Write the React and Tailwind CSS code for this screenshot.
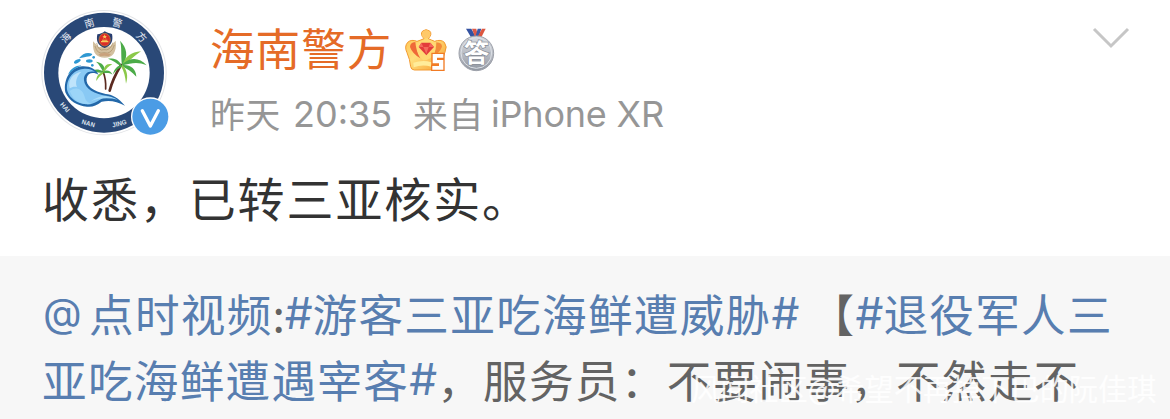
import clsx from 'clsx'

const Avatar = () => (
  <svg viewBox="0 0 420 420" className="h-[140px] w-[140px] shrink-0">
    <circle cx="207" cy="203" r="188" fill="#e3e5e8" />
    <circle cx="207" cy="203" r="185" fill="#fff" />
    <circle cx="207" cy="203" r="180" fill="#294877" />
    <circle cx="207" cy="203" r="137" fill="#fff" />

    {/* Ring lettering */}
    <g fill="#e8edf5" textAnchor="middle" fontSize="30" fontFamily="'Noto Sans CJK SC', sans-serif">
      <text transform="translate(92 98) rotate(-47)" y="11">海</text>
      <text transform="translate(163 54) rotate(-16)" y="11">南</text>
      <text transform="translate(247 53) rotate(15)" y="11">警</text>
      <text transform="translate(320 96) rotate(46)" y="11">方</text>
    </g>
    <g fill="#dbe3ee" textAnchor="middle" fontSize="20" fontWeight="700" fontFamily="'Liberation Sans', sans-serif">
      <text transform="translate(90 307) rotate(49)" y="7" textLength="32" lengthAdjust="spacingAndGlyphs">HAI</text>
      <text transform="translate(160 355) rotate(15)" y="7" textLength="40" lengthAdjust="spacingAndGlyphs">NAN</text>
      <text transform="translate(253 355) rotate(-15)" y="7" textLength="44" lengthAdjust="spacingAndGlyphs">JING</text>
    </g>

    {/* Palms */}
    <g fill="none" stroke="#5b2a20" strokeLinecap="round">
      <path d="M224 257C232 225 246 200 258 180" strokeWidth="8" />
      <path d="M212 252C213 232 210 214 204 199" strokeWidth="5" />
    </g>
    <g fill="#4bab48">
      <path d="M261 181C257 150 261 126 255 107C276 128 280 153 264 181Z" />
      <path d="M262 180C271 155 288 141 318 139C298 153 282 168 264 181Z" fill="#8bc94a" />
      <path d="M262 178C285 157 312 156 335 181C309 170 290 174 262 181Z" />
      <path d="M261 180C286 178 303 190 304 215C291 201 279 193 261 184Z" />
      <path d="M262 180C275 193 281 212 273 236C271 214 267 198 258 184Z" fill="#8bc94a" />
      <path d="M260 181C250 163 238 160 219 161C234 166 245 175 258 184Z" />
      <path d="M260 181C247 181 237 193 234 208C241 197 250 191 261 185Z" />
      <path d="M204 199C197 188 193 178 183 170C202 173 211 183 208 200Z" />
      <path d="M204 200C208 182 215 173 232 178C221 183 214 191 207 202Z" fill="#8bc94a" />
      <path d="M204 199C188 190 177 192 164 202C181 199 190 203 205 204Z" />
      <path d="M205 200C216 193 227 198 233 209C222 203 215 204 205 205Z" />
      <path d="M203 201C190 206 183 216 184 228C192 216 197 211 206 205Z" fill="#8bc94a" />
    </g>

    {/* Wave */}
    <path d="M91 262C84 222 108 186 142 184C166 183 183 193 191 210C176 200 158 203 155 220C151 242 175 260 212 267C230 268 250 278 270 302C246 290 226 284 200 290C184 302 172 307 156 305C127 303 102 288 91 262Z" fill="#2368a9" />
    <path d="M97 258C91 225 114 195 144 192C163 190 173 195 180 201C160 196 145 207 147 226C149 251 178 269 219 273C194 281 177 301 153 298C126 295 105 281 97 258Z" fill="#89c9f4" />
    <path d="M104 250C97 224 115 204 139 200C124 214 120 232 126 246C118 244 110 246 104 250Z" fill="#bfe4fb" />
    <path d="M104 258C127 241 145 254 151 282C154 290 163 295 169 296C132 301 113 282 104 258Z" fill="#9cd5f8" />
    <path d="M165 290C195 268 222 268 248 284C222 278 193 278 165 290Z" fill="#a9dcfa" />
    <g fill="#2e98d2">
      <path d="M99 209C107 188 128 180 139 182C120 188 111 198 99 209Z" />
      <ellipse cx="127" cy="169" rx="11" ry="5" transform="rotate(-28 127 169)" />
      <path d="M132 160C143 145 158 141 172 147C169 156 156 154 132 160Z" />
      <ellipse cx="163" cy="168" rx="10" ry="5" />
      <circle cx="176" cy="157" r="4" />
      <circle cx="172" cy="181" r="4" />
    </g>

    {/* Police crest */}
    <path d="M174 109C172 148 186 158 209 158C233 157 246 143 242 107L226 124L191 126Z" fill="#d3c09f" />
    <path d="M180 123Q187 150 207 143Q229 150 238 120M185 114Q190 140 207 134Q225 139 234 113" fill="none" stroke="#a98d63" strokeWidth="2" />
    <path d="M209 79C217 83 225 86 231 87C235 106 230 123 209 129C188 122 183 108 187 88C195 87 203 84 209 79Z" fill="#273d70" />
    <ellipse cx="209" cy="104" rx="17" ry="19" fill="#db2c29" stroke="#b78d43" strokeWidth="2" />
    <path d="M209 88L211 93H216L212 96L214 101L209 98L204 101L206 96L202 93H207ZM198 108H220V112H198ZM201 104H217V107H201Z" fill="#f8c95a" />
    <path d="M190 148Q209 140 228 148L221 154Q209 150 196 154Z" fill="#c9a27c" />

    {/* Verified badge */}
    <circle cx="346" cy="335" r="58" fill="#fff" />
    <circle cx="346" cy="335" r="54" fill="#4b9ce5" />
    <path d="M322 317L346 363L370 317" fill="none" stroke="#fff" strokeWidth="10" strokeLinejoin="round" strokeLinecap="round" />
  </svg>
)

const CrownIcon = () => (
  <svg viewBox="0 0 132 132" className="h-11 w-11">
    <defs>
      <linearGradient id="crown" x1="0" y1="0" x2="1" y2="1">
        <stop offset="0" stopColor="#ffbd49" />
        <stop offset=".45" stopColor="#ffdf7d" />
        <stop offset="1" stopColor="#f79a2c" />
      </linearGradient>
    </defs>
    <path d="M20 116Q18 94 9 74Q0 56 11 43Q22 33 39 40Q51 36 60 32Q47 18 56 9Q66 1 77 9Q86 18 73 32Q82 36 92 40Q110 33 121 43Q131 56 123 72Q114 92 113 116Q112 125 101 126H31Q21 125 20 116Z" fill="url(#crown)" stroke="#f39a32" strokeWidth="3" />
    <circle cx="66" cy="19" r="12" fill="#ffc96a" />
    <path d="M34 42Q18 43 18 57Q25 77 49 91Q36 69 34 42Z" fill="#ef6938" />
    <path d="M97 43Q114 44 114 56Q108 73 86 86Q97 66 97 43Z" fill="#f28a3b" />
    <path d="M38 47Q37 75 57 97Q76 98 91 78Q96 64 94 47L66 34Z" fill="#ffd974" />
    <path d="M28 104Q58 94 82 103V116Q54 108 29 118Z" fill="#ffec9a" />
    <path d="M52 44H79L90 57L67 82L44 57Z" fill="#e33c3b" />
    <path d="M52 44L58 57H44ZM79 44L74 57H90ZM58 57H74L67 78Z" fill="#f46a5c" />
    <path d="M84 76H120V91H101V94H120V127H83V112H103V108H84Z" fill="#fff" stroke="#f17b24" strokeWidth="4" />
  </svg>
)

const MedalIcon = () => (
  <svg viewBox="0 0 120 132" className="h-11 w-10">
    <defs>
      <linearGradient id="medal" x1="0" y1="0" x2="0" y2="1">
        <stop offset="0" stopColor="#d8dbe0" />
        <stop offset=".55" stopColor="#b7bbc3" />
        <stop offset="1" stopColor="#90959f" />
      </linearGradient>
    </defs>
    <path d="M27 2H43L57 28H42Z" fill="#3452a1" />
    <path d="M45 2H58L62 22L54 28Z" fill="#dc5a48" />
    <path d="M62 2H73L65 28H55Z" fill="#3c58a7" />
    <path d="M75 2H86L73 28H61Z" fill="#dc563f" />
    <circle cx="58" cy="76" r="52" fill="url(#medal)" stroke="#9da1aa" strokeWidth="3" />
    <circle cx="58" cy="75" r="46" fill="none" stroke="#dce0e6" strokeWidth="3" />
    <text x="58" y="103" textAnchor="middle" fontSize="76" fontWeight="700" fill="#fff" stroke="#8b909a" strokeWidth="4" paintOrder="stroke" fontFamily="'Noto Sans CJK SC', sans-serif">答</text>
  </svg>
)

const Tag = ({ className, children }) => (
  <span className={clsx('text-[#587eb0]', className)}>{children}</span>
)

const Hash = () => (
  <span className="w-7 shrink-0 text-center font-['Inter','Noto_Sans_CJK_SC',sans-serif] text-[44px] tracking-normal text-[#587eb0]">#</span>
)

const App = () => {
  return (
    <div className="relative h-[419px] w-[1170px] overflow-hidden bg-white font-['Noto_Sans_CJK_SC',sans-serif]">
      <header className="flex h-[150px] pt-[5px] pl-[35px]">
        <Avatar />
        <div className="ml-[35px] flex-1 pt-[18px]">
          <div className="flex h-[54px] items-center">
            <span className="w-[194px] pb-[7px] text-[44.6px] leading-[54px] tracking-[1px] text-[#e56b27]">海南警方</span>
            <CrownIcon />
            <div className="ml-[9px]">
              <MedalIcon />
            </div>
          </div>
          <div className="mt-[10px] flex h-[54px] items-center text-[34.8px] leading-[54px] whitespace-nowrap text-[#969696]">
            <span className="w-[83px] pb-[2px] tracking-[0.7px]">昨天</span>
            <span className="w-[120px] font-['Inter',sans-serif] text-[36px]">20:35</span>
            <span className="w-[78px] pb-[2px] tracking-[0.7px]">来自</span>
            <span className="font-['Inter',sans-serif] text-[36px] tracking-[-0.2px]">iPhone XR</span>
          </div>
        </div>
        <svg viewBox="0 0 40 24" className="mt-[21px] mr-[39px] h-6 w-10" fill="none" stroke="#c6c6c6" strokeWidth="3">
          <path d="M3 3L20 20L37 3" />
        </svg>
      </header>

      <p className="flex h-[106px] items-center pb-[13px] pl-[42px] text-[47px] leading-[60px] tracking-[1.9px] whitespace-nowrap text-[#333]">
        收悉，已转三亚核实。
      </p>

      {/* Quoted post */}
      <div className="h-[163px] bg-[#f7f7f7] pt-6 pl-[43px] text-[44.6px] leading-[66px] tracking-[1.3px] whitespace-nowrap text-[#636363]">
        <div className="flex h-[66px]">
          <Tag className="w-[46px] shrink-0 font-['Inter',sans-serif] text-[40px]">@</Tag>
          <Tag>点时视频</Tag>
          <span className="w-[12px] shrink-0 text-center">:</span>
          <Hash />
          <Tag>游客三亚吃海鲜遭威胁</Tag>
          <Hash />
          <span className="ml-[10px]">【</span>
          <Hash />
          <Tag>退役军人三</Tag>
        </div>
        <div className="-ml-px flex h-[66px]">
          <Tag>亚吃海鲜遭遇宰客</Tag>
          <Hash />
          <span>，服务员：不要闹事，不然走不</span>
        </div>
      </div>

      {/* Watermark */}
      <div className="absolute top-[365px] left-[691px] text-[29.2px] leading-[44px] whitespace-nowrap text-white/85">
        风闻社区@希望不再掉下巴的阮佳琪
      </div>
    </div>
  )
}

export default App
